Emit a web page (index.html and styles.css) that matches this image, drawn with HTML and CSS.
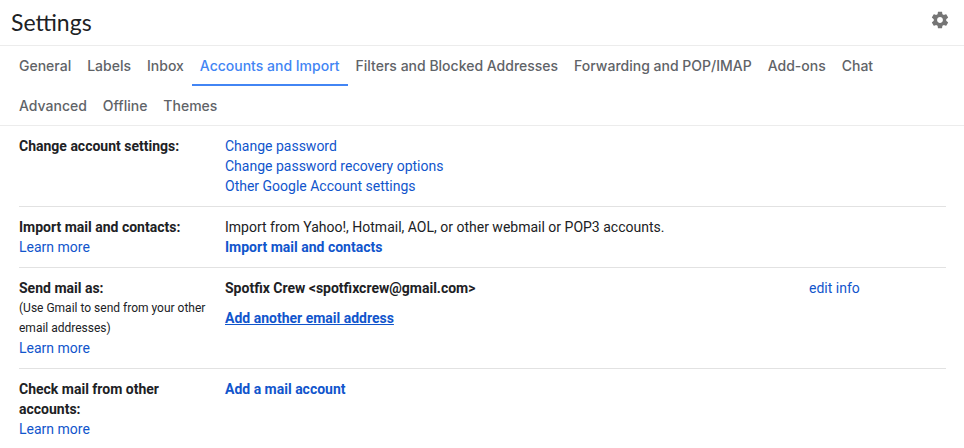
FILE: index.html
```html
<!DOCTYPE html>
<html lang="en">
<head>
<meta charset="utf-8">
<title>Settings</title>
<link rel="stylesheet" href="styles.css">
</head>
<body>
<header class="header">
  <h1>Settings</h1>
  <button class="gear" type="button" aria-label="Settings menu">
    <svg viewBox="0 0 24 24" width="20" height="20" aria-hidden="true"><path fill="#757575" d="M19.43 12.98c.04-.32.07-.64.07-.98s-.03-.66-.07-.98l2.11-1.65c.19-.15.24-.42.12-.64l-2-3.46c-.12-.22-.39-.3-.61-.22l-2.49 1c-.52-.4-1.08-.73-1.69-.98l-.38-2.65C14.46 2.18 14.25 2 14 2h-4c-.25 0-.46.18-.49.42l-.38 2.65c-.61.25-1.17.59-1.69.98l-2.49-1c-.23-.09-.49 0-.61.22l-2 3.46c-.13.22-.07.49.12.64l2.11 1.65c-.04.32-.07.65-.07.98s.03.66.07.98l-2.11 1.65c-.19.15-.24.42-.12.64l2 3.46c.12.22.39.3.61.22l2.49-1c.52.4 1.08.73 1.69.98l.38 2.65c.03.24.24.42.49.42h4c.25 0 .46-.18.49-.42l.38-2.65c.61-.25 1.17-.59 1.69-.98l2.49 1c.23.09.49 0 .61-.22l2-3.46c.12-.22.07-.49-.12-.64l-2.11-1.65zM12 15.5c-1.93 0-3.5-1.57-3.5-3.5s1.57-3.5 3.5-3.5 3.5 1.57 3.5 3.5-1.57 3.5-3.5 3.5z"/></svg>
  </button>
</header>
<nav class="tabs">
  <a href="#">General</a>
  <a href="#">Labels</a>
  <a href="#">Inbox</a>
  <a href="#" class="active" aria-current="page">Accounts and Import</a>
  <a href="#">Filters and Blocked Addresses</a>
  <a href="#">Forwarding and POP/IMAP</a>
  <a href="#">Add-ons</a>
  <a href="#">Chat</a>
  <a href="#">Advanced</a>
  <a href="#">Offline</a>
  <a href="#">Themes</a>
</nav>
<main class="settings">
  <section class="row">
    <div class="label"><h2>Change account settings:</h2></div>
    <div class="value">
      <a href="#">Change password</a>
      <a href="#">Change password recovery options</a>
      <a href="#">Other Google Account settings</a>
    </div>
  </section>
  <section class="row">
    <div class="label"><h2>Import mail and contacts:</h2><a href="#">Learn more</a></div>
    <div class="value">
      <p>Import from Yahoo!, Hotmail, AOL, or other webmail or POP3 accounts.</p>
      <a href="#" class="strong">Import mail and contacts</a>
    </div>
  </section>
  <section class="row">
    <div class="label"><h2>Send mail as:</h2><p class="note">(Use Gmail to send from your other email addresses)</p><a href="#">Learn more</a></div>
    <div class="value spaced">
      <p class="strong">Spotfix Crew &lt;spotfixcrew@gmail.com&gt;</p>
      <a href="#" class="strong underlined">Add another email address</a>
    </div>
    <div class="action"><a href="#">edit info</a></div>
  </section>
  <section class="row">
    <div class="label"><h2>Check mail from other accounts:</h2><a href="#">Learn more</a></div>
    <div class="value"><a href="#" class="strong">Add a mail account</a></div>
  </section>
</main>
</body>
</html>
```
FILE: styles.css
```css
* { box-sizing: border-box; }
body {
  margin: 0;
  background: #fff;
  color: #202124;
  font: 14px/20px Roboto, sans-serif;
}
h1, h2, p { margin: 0; }
a { color: #15c; text-decoration: none; }
.header {
  display: flex;
  align-items: flex-start;
  justify-content: space-between;
  padding: 8px 14px 9px 11px;
  border-bottom: 1px solid #ececec;
}
h1 { font: 23px/28px Lato, sans-serif; }
.gear { display: flex; padding: 2px 0; border: 0; background: none; }
.tabs {
  display: flex;
  flex-wrap: wrap;
  padding: 0 11px;
  box-shadow: inset 0 -1px #ececec;
}
.tabs a {
  padding: 2px 8px 0;
  border-bottom: 2px solid transparent;
  color: #5f6368;
  font-family: Inter, sans-serif;
  font-weight: 500;
  line-height: 36px;
}
.tabs .active { color: #4285f4; border-color: #4285f4; }
.settings { padding: 0 18px 0 19px; }
.row {
  display: grid;
  grid-template-columns: 200px minmax(0, 578px) 1fr;
  column-gap: 6px;
  padding: 10px 0;
  border-bottom: 1px solid #e2e2e2;
}
.row:last-child { border-bottom: 0; }
.label, .value { display: flex; flex-direction: column; align-items: flex-start; }
h2 { font-size: 14px; line-height: 20px; font-weight: 700; }
.strong { font-weight: 700; }
.spaced { gap: 10px; }
.note { font-size: 12px; }
.underlined { text-decoration: underline; }
```
